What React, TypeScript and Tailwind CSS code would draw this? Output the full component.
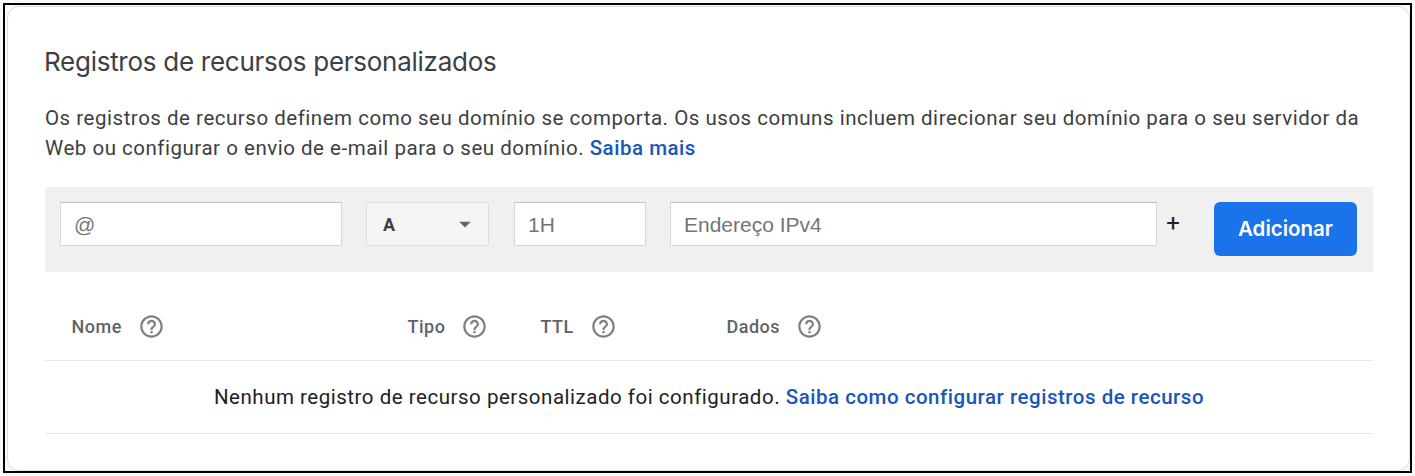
import { ReactNode } from 'react'
import { MdHelpOutline, MdArrowDropDown } from 'react-icons/md'

const columns = [
  { label: 'Nome', width: 'w-[336px]' },
  { label: 'Tipo', width: 'w-[133px]' },
  { label: 'TTL', width: 'w-[186px]' },
  { label: 'Dados', width: 'flex-1' },
]

function Link({ children }: { children: ReactNode }) {
  return (
    <a href="#" className="font-medium text-[#1a56b8]">
      {children}
    </a>
  )
}

function Field({ placeholder, className }: { placeholder: string; className: string }) {
  return (
    <input
      placeholder={placeholder}
      className={`h-11 border border-[#d9d9d9] border-t-[#c0c0c0] bg-white px-[13px] pt-0.5 font-[Liberation_Sans,sans-serif] text-[21px] placeholder:text-[#757575] ${className}`}
    />
  )
}

export default function App() {
  return (
    <div className="h-[476px] w-[1415px] bg-[#f8f9fa] p-[3px] font-[Roboto,sans-serif] text-[#3c4043]">
      <div className="h-[470px] w-[1409px] border-2 border-black pt-px pl-0.5">
        <section className="h-full rounded-xl border border-[#dadce0] bg-white px-[37px] pt-[39px]">
          <h2 className="-ml-px h-8 w-max font-[Inter,sans-serif] text-[26px] leading-8 tracking-[-0.27px] whitespace-nowrap">
            Registros de recursos personalizados
          </h2>

          <p className="mt-[25px] text-[20.5px] leading-[30px] tracking-[0.52px] whitespace-nowrap">
            Os registros de recurso definem como seu domínio se comporta. Os usos comuns incluem direcionar seu domínio para o seu servidor da
            <br />
            Web ou configurar o envio de e-mail para o seu domínio. <Link>Saiba mais</Link>
          </p>

          {/* New record form */}
          <div className="mt-6 flex h-[85px] w-[1328px] items-start bg-[#f0f0f0] px-[15px] pt-[15px]">
            <Field placeholder="@" className="w-[282px]" />
            <button className="ml-6 flex h-11 w-[123px] items-center justify-between rounded-[3px] border border-[#dcdcdc] bg-[#f5f5f5] pr-[9px] pl-4 text-[18px] font-bold">
              A
              <MdArrowDropDown size={28} className="text-[#666]" />
            </button>
            <Field placeholder="1H" className="ml-[25px] w-[132px]" />
            <Field placeholder="Endereço IPv4" className="ml-6 w-[487px]" />
            <button className="ml-2 h-11 w-4 text-[24px] leading-[40px] text-[#202124]">
              <span className="block h-[42px]">+</span>
            </button>
            <button className="ml-[33px] h-[54px] w-[143px] rounded-md bg-[#1a73e8] font-[Inter,sans-serif] text-[20.5px] font-semibold text-white">
              Adicionar
            </button>
          </div>

          {/* Record table */}
          <div className="flex h-[89px] w-[1328px] items-center border-b border-[#e8e8e8] pt-[21px] pl-[26.5px] text-[18px] font-medium tracking-[0.5px] text-[#5f6368]">
            {columns.map(({ label, width }) => (
              <div key={label} className={`flex items-center gap-4 ${width}`}>
                {label}
                <MdHelpOutline size={27} className="text-[#808080]" />
              </div>
            ))}
          </div>
          <div className="flex h-[73px] w-[1328px] items-center justify-center border-b border-[#e8e8e8] text-[20.5px] leading-[30px] tracking-[0.52px] whitespace-pre text-[#202124]">
            Nenhum registro de recurso personalizado foi configurado. <Link>Saiba como configurar registros de recurso</Link>
          </div>
        </section>
      </div>
    </div>
  )
}
